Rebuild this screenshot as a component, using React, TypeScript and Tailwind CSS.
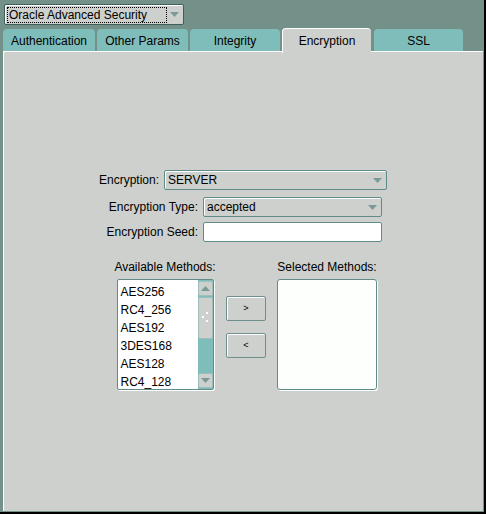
import React from "react";

// Oracle Net Manager — Oracle Advanced Security / Encryption tab

const FONT = { fontFamily: '"Liberation Sans", Arial, Helvetica, sans-serif' };

function Arrow({ className = "" }: { className?: string }) {
  return (
    <svg width="9" height="5" viewBox="0 0 9 5" className={className}>
      <path d="M0 0 H9 L4.5 5 Z" fill="#7a9a98" />
    </svg>
  );
}

function Combo({ value, width }: { value: string; width: string }) {
  return (
    <div
      className={`${width} h-[20px] flex items-center justify-between rounded-[2px] border border-[#5f8c88] bg-[#cdd0cc] pl-[3px] pr-[4px] shadow-[inset_1px_1px_0_#ffffff]`}
    >
      <span className="text-black">{value}</span>
      <Arrow />
    </div>
  );
}

const tabs = [
  { label: "Authentication", w: "w-[92px]", ml: "ml-0" },
  { label: "Other Params", w: "w-[91px]", ml: "ml-[2px]" },
  { label: "Integrity", w: "w-[90px]", ml: "ml-[2px]" },
  { label: "Encryption", w: "w-[89px]", ml: "ml-[2px]", active: true },
  { label: "SSL", w: "w-[89px]", ml: "ml-[3px]" },
];

const methods = ["AES256", "RC4_256", "AES192", "3DES168", "AES128", "RC4_128"];

export default function App() {
  return (
    <div
      className="w-[486px] h-[514px] bg-[#739089] border-r-2 border-b-2 border-black flex flex-col text-[12px] text-black overflow-hidden"
      style={FONT}
    >
      {/* 製品セレクタ */}
      <div className="pl-[4px] pt-[4px]">
        <div className="w-[180px] h-[21px] rounded-[2px] border border-[#3f5f5b] bg-[#cdd0cc] shadow-[inset_1px_1px_0_#ffffff] flex items-center pl-[2px] pr-[4px]">
          <div className="h-[16px] w-[160px] border border-dotted border-black flex items-center pl-[1px] leading-none">
            Oracle Advanced Security
          </div>
          <Arrow className="ml-auto" />
        </div>
      </div>

      {/* タブ */}
      <div className="flex items-start pl-[3px] mt-[3px] h-[23px] relative z-10">
        {tabs.map((t) =>
          t.active ? (
            <div
              key={t.label}
              className={`${t.w} ${t.ml} h-[25px] bg-[#cdd0cc] rounded-t-[4px] border-t border-l border-white flex items-center justify-center pb-[1px]`}
            >
              {t.label}
            </div>
          ) : (
            <div
              key={t.label}
              className={`${t.w} ${t.ml} mt-[1px] h-[22px] pt-[2px] bg-[#7fbdbb] rounded-t-[4px] flex items-center justify-center`}
            >
              {t.label}
            </div>
          )
        )}
      </div>

      {/* パネル */}
      <div className="ml-[3px] w-[480px] flex-1 bg-[#cdd0cc] border-t border-l border-white mb-[1px] flex flex-col">
        <div className="mt-[118px] flex items-center">
          <div className="w-[157px] text-right pr-[2px]">Encryption:</div>
          <div className="ml-[3px]">
            <Combo value="SERVER" width="w-[223px]" />
          </div>
        </div>
        <div className="mt-[7px] flex items-center">
          <div className="w-[196px] text-right pr-[2px]">Encryption Type:</div>
          <div className="ml-[3px]">
            <Combo value="accepted" width="w-[179px]" />
          </div>
        </div>
        <div className="mt-[5px] flex items-center">
          <div className="w-[196px] text-right pr-[2px]">Encryption Seed:</div>
          <div className="ml-[3px] w-[179px] h-[20px] rounded-[2px] border border-[#5f8c88] bg-white" />
        </div>

        {/* 方式リスト */}
        <div className="mt-[18px] flex">
          <div className="ml-[109px] w-[104px] flex flex-col items-center">
            <div className="leading-[14px]">Available Methods:</div>
            <div className="mt-[5px] w-[97px] h-[111px] rounded-[2px] border border-[#5f8c88] bg-white flex shadow-[1px_1px_0_#ffffff]">
              <div className="flex-1 pl-[3px] pt-[3px]">
                {methods.map((m) => (
                  <div key={m} className="leading-[18px]">
                    {m}
                  </div>
                ))}
              </div>
              <div className="w-[15px] flex flex-col bg-[#7fbdbb] pt-[1px] pb-[1px]">
                <div className="h-[15px] bg-[#cdd0cc] border border-[#9fbfbd] rounded-[2px] flex items-center justify-center">
                  <svg width="9" height="5" viewBox="0 0 9 5">
                    <path d="M0 5 H9 L4.5 0 Z" fill="#7a9a98" />
                  </svg>
                </div>
                <div className="mt-[1px] h-[42px] bg-[#cdd0cc] border border-[#9fbfbd] rounded-[2px] relative">
                  <span className="absolute left-[7px] top-[14px] w-[2px] h-[2px] bg-white" />
                  <span className="absolute left-[3px] top-[18px] w-[2px] h-[2px] bg-white" />
                  <span className="absolute left-[7px] top-[22px] w-[2px] h-[2px] bg-white" />
                </div>
                <div className="flex-1" />
                <div className="h-[15px] bg-[#cdd0cc] border border-[#9fbfbd] rounded-[2px] flex items-center justify-center">
                  <Arrow />
                </div>
              </div>
            </div>
          </div>

          <div className="ml-[9px] flex flex-col pt-[36px]">
            <button className="w-[40px] h-[25px] bg-[#cdd0cc] border border-[#6f8f8c] rounded-[2px] shadow-[inset_1px_1px_0_#ffffff] text-[9px] leading-none">
              &gt;
            </button>
            <button className="mt-[12px] w-[40px] h-[25px] bg-[#cdd0cc] border border-[#6f8f8c] rounded-[2px] shadow-[inset_1px_1px_0_#ffffff] text-[9px] leading-none">
              &lt;
            </button>
          </div>

          <div className="ml-[11px] w-[100px] flex flex-col items-center">
            <div className="leading-[14px] whitespace-nowrap">Selected Methods:</div>
            <div className="mt-[5px] w-[100px] h-[111px] rounded-[3px] border border-[#5f8c88] bg-[#fcfffc] shadow-[1px_1px_0_#ffffff]" />
          </div>
        </div>
      </div>
    </div>
  );
}
